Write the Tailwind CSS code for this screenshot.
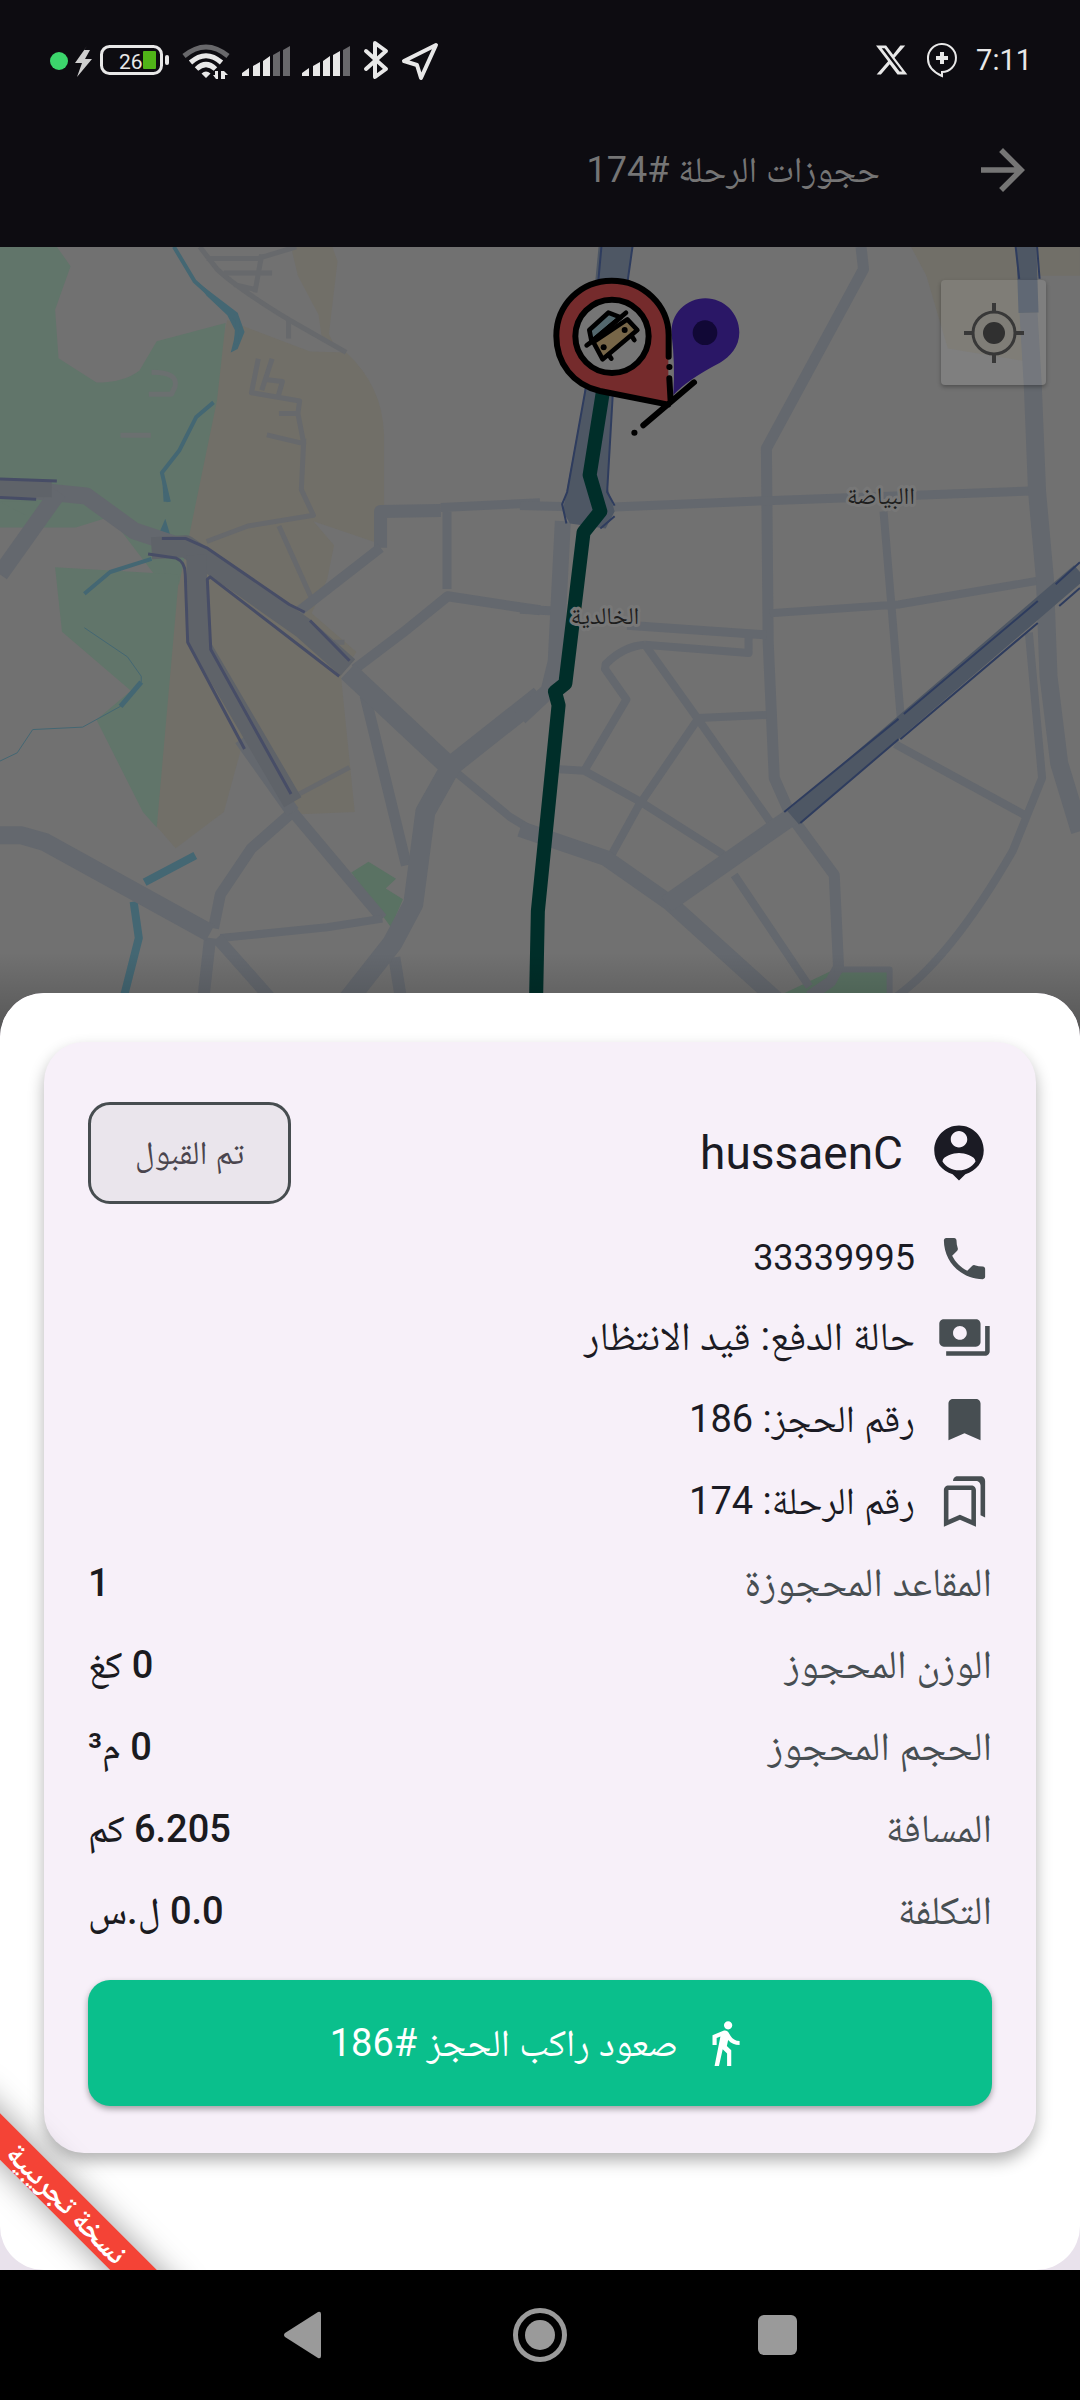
<!DOCTYPE html>
<html lang="ar" dir="rtl">
<head>
<meta charset="utf-8">
<meta name="viewport" content="width=device-width, initial-scale=1">
<title>حجوزات الرحلة</title>
<script src="https://cdn.jsdelivr.net/npm/@tailwindcss/browser@4"></script>
</head>
<body class="flex min-h-screen flex-col bg-[#0d0c11] font-['Roboto','Noto_Naskh_Arabic','Noto_Sans_Arabic','DejaVu_Sans',sans-serif] text-[#1b1b24]">

<header class="text-[#757575]">
  <!-- status bar -->
  <div dir="ltr" class="flex h-[120px] items-center justify-between pr-12 pl-[50px] text-[#e8e8e8]">
    <svg class="h-[44px] w-[392px]" viewBox="50 38 392 44" fill="#e8e8e8" aria-hidden="true">
      <circle cx="59" cy="61" r="9" fill="#3cd66c"/>
      <path d="M87 46 75 63h7l-5 14 15-18h-7l5-9h-6z" fill="#cfcfcf"/>
      <rect x="101.500" y="46.500" width="60" height="27" rx="8" fill="none" stroke="#e8e8e8" stroke-width="3"/>
      <rect x="165" y="55" width="4" height="10" rx="2"/>
      <rect x="143" y="51" width="13" height="18" rx="1" fill="#50b418"/>
      <text x="119" y="69" font-size="21">26</text>
      <g fill="none" stroke="#e8e8e8" stroke-width="5">
        <path d="M184 56Q206 38 228 56" stroke="#68686b"/>
        <path d="M190.500 62.500Q206 49 221.500 62.500"/>
        <path d="M196.500 69Q206 60 215.500 69"/>
      </g>
      <path d="M201.500 73.500q4.500-4 9 0L206 78zM218 71v8h-2l-3-4h2v-4zm3 8v-8h3l4 4h-3v4z"/>
      <g>
        <path d="M242 76v-3l7-5v8zM253 76V66l7-4v14zM263 76V61l7-5v20z"/>
        <path d="M273 76V55l7-4v25zM283 76V50l7-4v30z" fill="#68686b"/>
        <path d="M302 76v-3l7-5v8zM313 76V66l7-4v14zM323 76V61l7-5v20zM333 76V55l7-4v25z"/>
        <path d="M343 76V50l7-4v30z" fill="#68686b"/>
      </g>
      <g fill="none" stroke="#e8e8e8" stroke-width="4" stroke-linejoin="round" stroke-linecap="round">
        <path d="m366 51 20 18-11 8V43l11 8-20 18"/>
        <path d="m436 45-32 16 13 4 4 13z"/>
      </g>
    </svg>
    <div class="flex items-center gap-[18px]">
      <svg class="h-8 w-[32px]" viewBox="0 0 24 24" fill="#e8e8e8" aria-hidden="true"><path d="M18.244 1.200h3.680l-8.040 9.190L23.500 22.800h-7.406l-5.800-7.584-6.638 7.584H.474l8.600-9.830L0 1.200h7.594l5.243 6.932zM17.610 20.700h2.039L6.486 3.240H4.298z"/></svg>
      <svg class="h-9 w-[32px]" viewBox="0 0 32 36" fill="none" stroke="#e8e8e8" stroke-width="2" aria-hidden="true"><path d="M16 34c-9-4-14-10-14-17a14 14 0 1 1 14 13z"/><path d="M16 10v12M10 16h12" stroke-width="4"/></svg>
      <time class="text-[29px] leading-9">7:11</time>
    </div>
  </div>
  <!-- app bar -->
  <div class="flex h-[127px] items-start gap-[90px] px-11 pt-[17px]">
    <button type="button" aria-label="رجوع" class="h-[66px] w-[66px]">
      <svg class="size-full" viewBox="0 0 24 24" fill="currentColor"><path d="m12 4-1.410 1.410L16.170 11H4v2h12.170l-5.580 5.590L12 20l8-8z"/></svg>
    </button>
    <h1 class="text-[36px] leading-[66px]">حجوزات الرحلة #174</h1>
  </div>
</header>

<main class="flex flex-1 flex-col bg-[#f0e9f3]">
  <section class="relative min-h-[400px] flex-1 overflow-hidden bg-[#717171]" aria-label="الخريطة">
    <svg class="absolute inset-0 size-full" viewBox="0 247 1080 790" preserveAspectRatio="xMidYMin slice" fill="none">
      <!-- western districts -->
      <g transform="translate(0 240) scale(.3444 .4847)" stroke-linejoin="round" class="[&_path]:[vector-effect:non-scaling-stroke]">
        <g fill="#716f68">
          <path d="M660 165 900 230 1005 232Q1110 300 1115 400L1115 630 910 580 970 630 950 700 905 770 1035 850 990 900 1030 1180 870 1185 840 1140 700 1050 650 1180 510 1255 455 1210 520 610 580 420z"/>
          <path d="M845 14h120l15 30-25 150 20 30-40-20-10-50-60-80z"/>
        </g>
        <g fill="#61756a">
          <path d="M0 14h165l40 40-45 90 10 100 110 50q80 0 125-25l50-60 200-38-25 160-110 380-60-10-140-130-100 22H0z"/>
          <path d="M0 540 110 540 75 568zM160 675 520 690 455 1212 415 1180 280 990 380 930 180 808z"/>
          <path d="M1020 1305 1070 1283 1150 1318 1120 1338 1170 1360 1135 1418z" fill="#5a7263"/>
        </g>
        <g stroke="#6b7070" stroke-width="5">
          <path d="M440 273q80 0 68 30l-10 15h-66M350 403h88"/>
        </g>
        <g fill="#446773">
          <path d="M570 85 690 150 710 190 690 225 670 232 685 190 660 155 600 115zM470 480 495 540 475 540zM480 575 495 610 460 608z"/>
        </g>
        <g stroke="#446773">
          <path d="M505 14 565 85 690 165 685 215" stroke-width="4"/>
          <path d="M620 335 570 365 520 435 470 480 490 540M440 658 320 685 245 730" stroke-width="4"/>
          <path d="M245 800 370 860 410 900 410 912 350 962 240 1005 95 1010 50 1058 0 1075" stroke-width="1"/>
          <path d="M410 912 350 962" stroke-width="5"/>
          <path d="M567 1270 420 1325M388 1365 403 1440 360 1560" stroke-width="8"/>
        </g>
        <g stroke="#67696c" stroke-width="5">
          <path d="M580 14 630 60Q690 100 840 165L1005 232M600 38h150L860 14M650 68h140M760 30 740 108M680 92l60 10M838 165v38M750 245 730 315 870 332 865 358h-55M790 245 760 310M770 288l50 4-12 30M865 358 882 420 775 402M882 410 875 515 910 568 720 590 600 622M810 590 905 740"/>
          <path d="M970 830h30M850 1150l165-62"/>
        </g>
        <g stroke="#64686e">
          <path d="M1105 635V560L1280 558" stroke-width="13"/>
          <path d="M1280 552 1568 542M1298 560V720" stroke-width="9"/>
          <path d="M870 765 1105 635M1030 885 1170 810 1300 735 1568 764" stroke-width="10"/>
          <path d="M1060 940 1180 1290M850 1180 1110 1400M620 1420 640 1350 730 1255 850 1180" stroke-width="11"/>
          <path d="M1310 1090 1480 1190 1568 1228M640 1440 950 1418 1110 1400" stroke-width="8"/>
          <path d="M610 1440 590 1568M630 1440 790 1568M1145 1480 1165 1568" stroke-width="12"/>
          <path d="M0 1228H60L130 1242 610 1430" stroke-width="18"/>
          <path d="M0 510 250 528 390 600 560 640" stroke-width="17"/>
          <path d="M0 690 170 520" stroke-width="17"/>
          <path d="M1010 890 1310 1090M1568 940 1310 1085 1235 1180 1200 1370 1140 1450 1010 1568" stroke-width="20"/>
          <path d="M700 1030 850 1180" stroke-width="14"/>
        </g>
        <g stroke="#5f6369">
          <path d="M0 513 150 513" stroke-width="17"/>
          <path d="M440 636 540 632 660 690 880 800 1010 882" stroke-width="22"/>
          <path d="M570 650 578 830 850 1160" stroke-width="20"/>
        </g>
        <g stroke="#474d66" stroke-width="3">
          <path d="M0 493 165 497M0 531 105 535M470 616 540 616 600 635 840 752 885 768M900 785 1015 868M430 648 510 656Q538 664 538 690L545 830 710 1050M985 900 610 695 602 700 612 845 845 1143"/>
        </g>
      </g>
      <!-- eastern districts -->
      <g transform="translate(520 240) scale(.3571 .4847)" stroke-linejoin="round" class="[&_path]:[vector-effect:non-scaling-stroke]">
        <path d="M1095 14h473v60h-120v180l-250-30-60-150z" fill="#716f68"/>
        <path d="M880 1505h155v63H700z" fill="#5a7263"/>
        <g stroke="#64686e" stroke-width="8">
          <path d="M955 14 962 60 690 430 695 830 712 1110 760 1190 880 1310 892 1500 870 1530 810 1560" stroke-width="11"/>
          <path d="M0 548 230 552 690 538 1430 518M0 762 110 766M300 795 690 815" stroke-width="9"/>
          <path d="M700 770 1060 752 1450 703M1018 560 1068 1000M350 835 640 852V820M350 835 Q290 838 240 875L238 885 298 948 180 1095M110 1092 180 1095 340 1160 570 1268M350 835 500 990 700 1200M690 980 500 986 330 1170 255 1270M600 1310 810 1540M1050 1040 1410 1185M1425 810 1462 1110 1380 1260Q1200 1490 1040 1568"/>
          <path d="M880 1505h155v50" stroke-width="6"/>
          <path d="M0 1215 240 1275 420 1368 720 1568" stroke-width="16"/>
          <path d="M410 1370 760 1190" stroke-width="18"/>
          <path d="M120 580 100 870 80 930 0 985" stroke-width="16"/>
          <path d="M1424 150 1436 300 1448 520 1470 700 1480 900 1510 1080 1568 1220" stroke-width="18"/>
        </g>
        <g stroke="#4e5764">
          <path d="M1418 14 1424 150" stroke-width="20"/>
          <path d="M765 1192 1568 685" stroke-width="18"/>
        </g>
        <path d="M220 14h95L258 320 245 510 265 560 240 595 140 585 120 560 180 320z" fill="#4e5764"/>
        <g stroke="#2e3c5e" stroke-width="2">
          <path d="M228 14 200 240 132 520 118 545 130 585M315 14 262 290 244 520 265 548M265 570 225 595M1388 14 1398 80M1448 14 1455 80"/>
          <path d="M740 1180 1060 988M785 1203 1060 1030M1075 978 1450 745M1065 1030 1450 790M1500 710 1568 665M1510 755 1568 718"/>
        </g>
        <path d="M235 300 195 485 225 560 178 603 127 915 98 932 108 960 50 1385 45 1568" stroke="#002e29" stroke-width="14"/>
      </g>
      <!-- place names -->
      <g font-size="24" fill="#1e1e1e" stroke="#777777" stroke-width="6" stroke-linejoin="round" paint-order="stroke" text-anchor="middle">
        <text x="881" y="504">االبياضة</text>
        <text x="605" y="624">الخالدية</text>
      </g>
      <!-- markers -->
      <g transform="translate(540 260) scale(.3333)" stroke-linecap="round" stroke-linejoin="round">
        <path d="M400 405Q406 310 395 225C390 160 440 115 496 115C552 115 598 160 598 217C598 262 570 290 540 308Q440 360 400 405z" fill="#2a1766"/>
        <circle cx="495" cy="218" r="37" fill="#110836"/>
        <path d="M385 432 180 395C100 375 48 310 48 228C48 130 122 60 215 60C310 60 385 135 385 225z" fill="#752b2c"/>
        <g stroke="#000" stroke-width="18">
          <path d="M386 290V225C385 135 310 62 215 62C122 62 49 135 49 228C49 310 100 375 180 393L385 434M388 355l4 70M462 367 310 496"/>
          <path d="M388 321h.5M283 518h.5"/>
          <circle cx="216" cy="229" r="110" fill="#757575"/>
        </g>
        <g stroke="#000" stroke-width="14">
          <path d="M155 245 148 210 205 158 242 172z" fill="#53676d"/>
          <path d="M160 246 262 178 292 210 188 298z" fill="#776648"/>
          <path d="M242 172 258 158M154 246 140 256M275 228 283 240M206 285 214 296M155 245 242 172"/>
        </g>
        <circle cx="254" cy="210" r="9" fill="#000"/><circle cx="191" cy="262" r="9" fill="#000"/>
      </g>
    </svg>
    <button type="button" aria-label="موقعي" class="absolute top-[33px] right-[34px] flex size-[105px] items-center justify-center rounded-sm bg-white/10 shadow-[0_2px_4px_rgba(0,0,0,0.3)]">
      <svg class="size-[60px]" viewBox="0 0 60 60" fill="none" stroke="#383838" stroke-width="3"><circle cx="30" cy="30" r="21"/><circle cx="30" cy="30" r="11" fill="#303030" stroke="none"/><path d="M30 0v9M30 51v9M0 30h9M51 30h9" stroke-width="4"/></svg>
    </button>
    <div class="absolute inset-x-0 bottom-0 h-[84px] bg-linear-to-t from-black/25 to-transparent"></div>
  </section>

  <section class="relative -mt-11 overflow-hidden bg-[#e9e2ec] [border-radius:44px_44px_0_0]">
    <div class="rounded-[44px] bg-white px-11 pt-[49px] pb-[117px]">
      <article class="rounded-[40px] bg-[#f7f0f9] px-11 pt-[60px] pb-[47px] shadow-[0_8px_16px_rgba(0,0,0,0.3)]">
        <div class="flex items-center justify-between">
          <div class="flex items-center gap-[23px]">
            <svg class="size-[66px]" viewBox="0 0 24 24" fill="currentColor" aria-hidden="true"><path d="M12 2c-4.970 0-9 4.030-9 9 0 4.170 2.840 7.670 6.690 8.690L12 22l2.310-2.310C18.160 18.670 21 15.170 21 11c0-4.970-4.030-9-9-9zm0 2c1.660 0 3 1.340 3 3s-1.340 3-3 3-3-1.340-3-3 1.340-3 3-3zm0 14.300c-2.500 0-4.710-1.280-6-3.220.03-1.990 4-3.080 6-3.080 1.990 0 5.970 1.090 6 3.080-1.290 1.940-3.500 3.220-6 3.220z"/></svg>
            <h2 class="text-[46px] leading-[66px]">hussaenC</h2>
          </div>
          <span class="flex h-[102px] items-center rounded-[22px] border-[3px] border-[#474d50] bg-[#eae5ec] px-[44px] text-[33px] text-[#4a454e]">تم القبول</span>
        </div>

        <ul class="mt-4 text-[38px] leading-[54px]">
          <li class="flex h-[76px] items-center gap-[22px]">
            <svg class="size-[55px] text-[#474e52]" viewBox="0 0 24 24" fill="currentColor" aria-hidden="true"><path d="M6.620 10.790c1.440 2.830 3.760 5.140 6.590 6.590l2.200-2.200c.27-.27.67-.36 1.020-.24 1.120.37 2.330.57 3.570.57.55 0 1 .45 1 1V20c0 .55-.45 1-1 1-9.390 0-17-7.610-17-17 0-.55.45-1 1-1h3.500c.55 0 1 .45 1 1 0 1.250.2 2.450.57 3.570.11.35.03.74-.25 1.020z"/></svg>
            <span class="text-[36px]">33339995</span>
          </li>
          <li class="flex h-[82px] items-center gap-[22px]">
            <svg class="size-[55px] text-[#474e52]" viewBox="0 0 24 24" fill="currentColor" aria-hidden="true"><path d="M19 14V6c0-1.100-.9-2-2-2H3c-1.100 0-2 .9-2 2v8c0 1.100.9 2 2 2h14c1.100 0 2-.9 2-2zm-9-1c-1.660 0-3-1.340-3-3s1.340-3 3-3 3 1.340 3 3-1.340 3-3 3zm13-6v11c0 1.100-.9 2-2 2H4v-2h17V7z"/></svg>
            <span class="text-[40px]">حالة الدفع: قيد الانتظار</span>
          </li>
          <li class="flex h-[82px] items-center gap-[22px]">
            <svg class="size-[55px] text-[#474e52]" viewBox="0 0 24 24" fill="currentColor" aria-hidden="true"><path d="M17 3H7c-1.100 0-2 .9-2 2v16l7-3 7 3V5c0-1.100-.9-2-2-2z"/></svg>
            <span>رقم الحجز: 186</span>
          </li>
          <li class="flex h-[82px] items-center gap-[22px]">
            <svg class="size-[55px] text-[#474e52]" viewBox="0 0 24 24" fill="currentColor" aria-hidden="true"><path d="M15 7v12.970l-4.210-1.810-.79-.34-.79.34L5 19.970V7h10m4-6H8.990C7.890 1 7 1.900 7 3h10c1.100 0 2 .9 2 2v13l2 1V3c0-1.100-.9-2-2-2zm-4 4H5c-1.100 0-2 .9-2 2v16l7-3 7 3V7c0-1.100-.9-2-2-2z"/></svg>
            <span>رقم الرحلة: 174</span>
          </li>
        </ul>

        <dl class="text-[38px] leading-[54px] text-[#1b1b1f]">
          <div class="flex h-[82px] items-center justify-between"><dt class="text-[40px] text-[#474e52]">المقاعد المحجوزة</dt><dd class="font-medium">1</dd></div>
          <div class="flex h-[82px] items-center justify-between"><dt class="text-[40px] text-[#474e52]">الوزن المحجوز</dt><dd class="font-medium">0 كغ</dd></div>
          <div class="flex h-[82px] items-center justify-between"><dt class="text-[40px] text-[#474e52]">الحجم المحجوز</dt><dd class="font-medium">0 م³</dd></div>
          <div class="flex h-[82px] items-center justify-between"><dt class="text-[40px] text-[#474e52]">المسافة</dt><dd class="font-medium">6.205 كم</dd></div>
          <div class="flex h-[82px] items-center justify-between"><dt class="text-[40px] text-[#474e52]">التكلفة</dt><dd class="font-medium">0.0 ل.س</dd></div>
        </dl>

        <button type="button" class="mt-7 flex h-[126px] w-full items-center justify-center gap-[22px] rounded-[22px] bg-[#0abf8c] text-[38px] text-white shadow-[0_3px_6px_rgba(0,0,0,0.35)]">
          <svg class="size-[50px]" viewBox="0 0 24 24" fill="currentColor" aria-hidden="true"><path d="M13.500 5.500c1.100 0 2-.9 2-2s-.9-2-2-2-2 .9-2 2 .9 2 2 2zM9.800 8.900 7 23h2.100l1.800-8 2.100 2v6h2v-7.500l-2.100-2 .6-3C14.800 12 16.800 13 19 13v-2c-1.900 0-3.500-1-4.300-2.400l-1-1.600c-.4-.6-1-1-1.700-1-.3 0-.5.1-.8.1L6 8.300V13h2V9.600z"/></svg>
          <span>صعود راكب الحجز #186</span>
        </button>
      </article>
    </div>

    <!-- corner ribbon -->
    <div class="pointer-events-none absolute bottom-0 left-0 size-[220px] overflow-hidden">
      <div class="absolute top-[137px] left-[-83px] flex h-[33px] w-[300px] rotate-45 items-center justify-center bg-[#f44336] text-[30px] leading-[33px] font-bold text-white shadow-[0_0_32px_rgba(0,0,0,0.4)]">نسخة تجريبية</div>
    </div>
  </section>
</main>

<nav dir="ltr" class="flex h-[130px] items-center justify-center bg-black text-[#9a9a9a]" aria-label="التنقل">
  <button type="button" aria-label="السابق" class="flex w-[22%] justify-center"><svg class="size-[54px]" viewBox="0 0 54 54" fill="currentColor"><path d="M10 25 43 4q3-1 3 2v42q0 3-3 2L10 29q-2-2 0-4z"/></svg></button>
  <button type="button" aria-label="الرئيسية" class="flex w-[22%] justify-center"><svg class="size-[54px]" viewBox="0 0 54 54" fill="currentColor"><circle cx="27" cy="27" r="24.500" fill="none" stroke="currentColor" stroke-width="5"/><circle cx="27" cy="27" r="15"/></svg></button>
  <button type="button" aria-label="التطبيقات" class="flex w-[22%] justify-center"><svg class="size-[54px]" viewBox="0 0 54 54" fill="currentColor"><rect x="7" y="7" width="39" height="40" rx="6"/></svg></button>
</nav>
</body>
</html>
